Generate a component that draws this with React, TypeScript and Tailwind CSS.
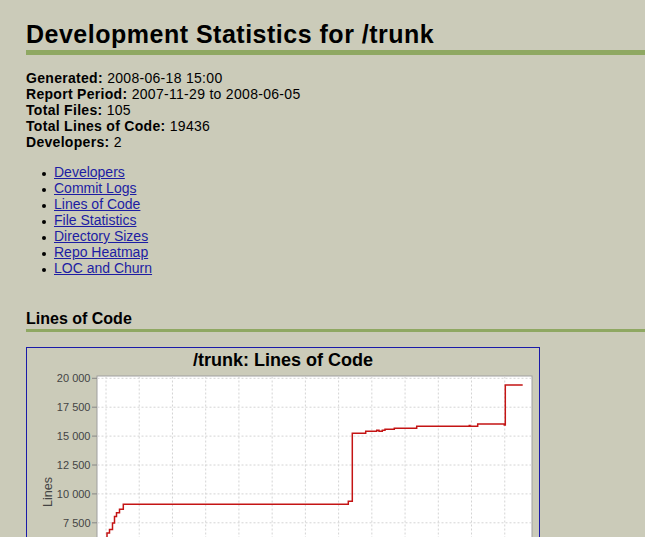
import React from "react";

const links = [
  "Developers",
  "Commit Logs",
  "Lines of Code",
  "File Statistics",
  "Directory Sizes",
  "Repo Heatmap",
  "LOC and Churn",
];

const meta: [string, string][] = [
  ["Generated:", "2008-06-18 15:00"],
  ["Report Period:", "2007-11-29 to 2008-06-05"],
  ["Total Files:", "105"],
  ["Total Lines of Code:", "19436"],
  ["Developers:", "2"],
];

const yLabels = ["20 000", "17 500", "15 000", "12 500", "10 000", "7 500", "5 000", "2 500", "0"];

const linePath =
  "M107 537 V533 H109.5 V529.5 H112.5 V523 H114.5 V516.5 H116.5 V512.7 H119.5 V509.3 H123.3 V504.3 H348.3 V501.3 H352.3 V433.3 H365.7 V431.3 H376.7 V430.3 H379 V431.3 H382.3 V430.3 H385 V429.3 H394.3 V428.3 H416.7 V426.3 H469.3 V425.5 H470 V426.3 H477.7 V424 H504.3 V425 H505.3 V385 H522.7";

function Chart() {
  const gridY = yLabels.map((_, i) => 378.3 + 28.9 * i);
  const gridX = Array.from({ length: 13 }, (_, i) => 106 + 33.23 * i);
  return (
    <svg width={512} height={300} viewBox="27 376 512 300" className="block overflow-visible">
      <rect x={97} y={376} width={435} height={258} fill="#ffffff" stroke="#a0a0a0" strokeWidth={1} />
      {gridY.map((y, i) => (
        <line key={"h" + i} x1={97.5} x2={531.5} y1={y} y2={y} stroke="#d4d4d4" strokeWidth={1} strokeDasharray="2 2" />
      ))}
      {gridX.map((x, i) => (
        <line key={"v" + i} x1={x} x2={x} y1={376.5} y2={633.5} stroke="#d4d4d4" strokeWidth={1} strokeDasharray="2 2" />
      ))}
      {gridY.map((y, i) => (
        <g key={"t" + i}>
          <line x1={92} x2={97} y1={y} y2={y} stroke="#888888" strokeWidth={1} />
          <text
            x={90.5}
            y={y + 4}
            textAnchor="end"
            fontSize={11}
            fill="#444444"
            fontFamily='"Liberation Sans", Arial, sans-serif'
          >
            {yLabels[i]}
          </text>
        </g>
      ))}
      <text
        transform="translate(51.5,492) rotate(-90)"
        textAnchor="middle"
        fontSize={12.5}
        fill="#444444"
        fontFamily='"Liberation Sans", Arial, sans-serif'
      >
        Lines
      </text>
      <path d={linePath} fill="none" stroke="#c41414" strokeWidth={1.5} />
    </svg>
  );
}

export default function App() {
  return (
    <div
      className="min-h-[700px] bg-[#cbcbb9] pl-[26px] pb-10 text-black"
      style={{ fontFamily: '"Liberation Sans", Arial, Helvetica, sans-serif' }}
    >
      <div className="pt-[19px]">
        <h1 className="text-[25px] font-bold leading-[30px] tracking-[0.5px] pb-px border-b-[5px] border-[#8fa862]">
          Development Statistics for /trunk
        </h1>
      </div>

      <div className="mt-[15px] text-[14px] leading-[16px] tracking-[0.3px]">
        {meta.map(([k, v]) => (
          <div key={k}>
            <span className="font-bold">{k}</span> {v}
          </div>
        ))}
      </div>

      <ul className="mt-[14px] pl-[16px] text-[14px] leading-[16px]">
        {links.map((l) => (
          <li key={l} className="flex items-start">
            <span className="mt-[8px] mr-[8px] h-[4px] w-[4px] shrink-0 rounded-full bg-black" />
            <a href="#" className="text-[#1d1da3] underline">
              {l}
            </a>
          </li>
        ))}
      </ul>

      <h2 className="mt-[33px] text-[16px] font-bold leading-[20px] border-b-[3px] border-[#8fa862]">
        Lines of Code
      </h2>

      <div className="mt-[15px] w-[514px] border border-[#1a1aa8]">
        <div className="h-[28px] text-center text-[18px] font-bold leading-[24px]">/trunk: Lines of Code</div>
        <Chart />
      </div>
    </div>
  );
}
